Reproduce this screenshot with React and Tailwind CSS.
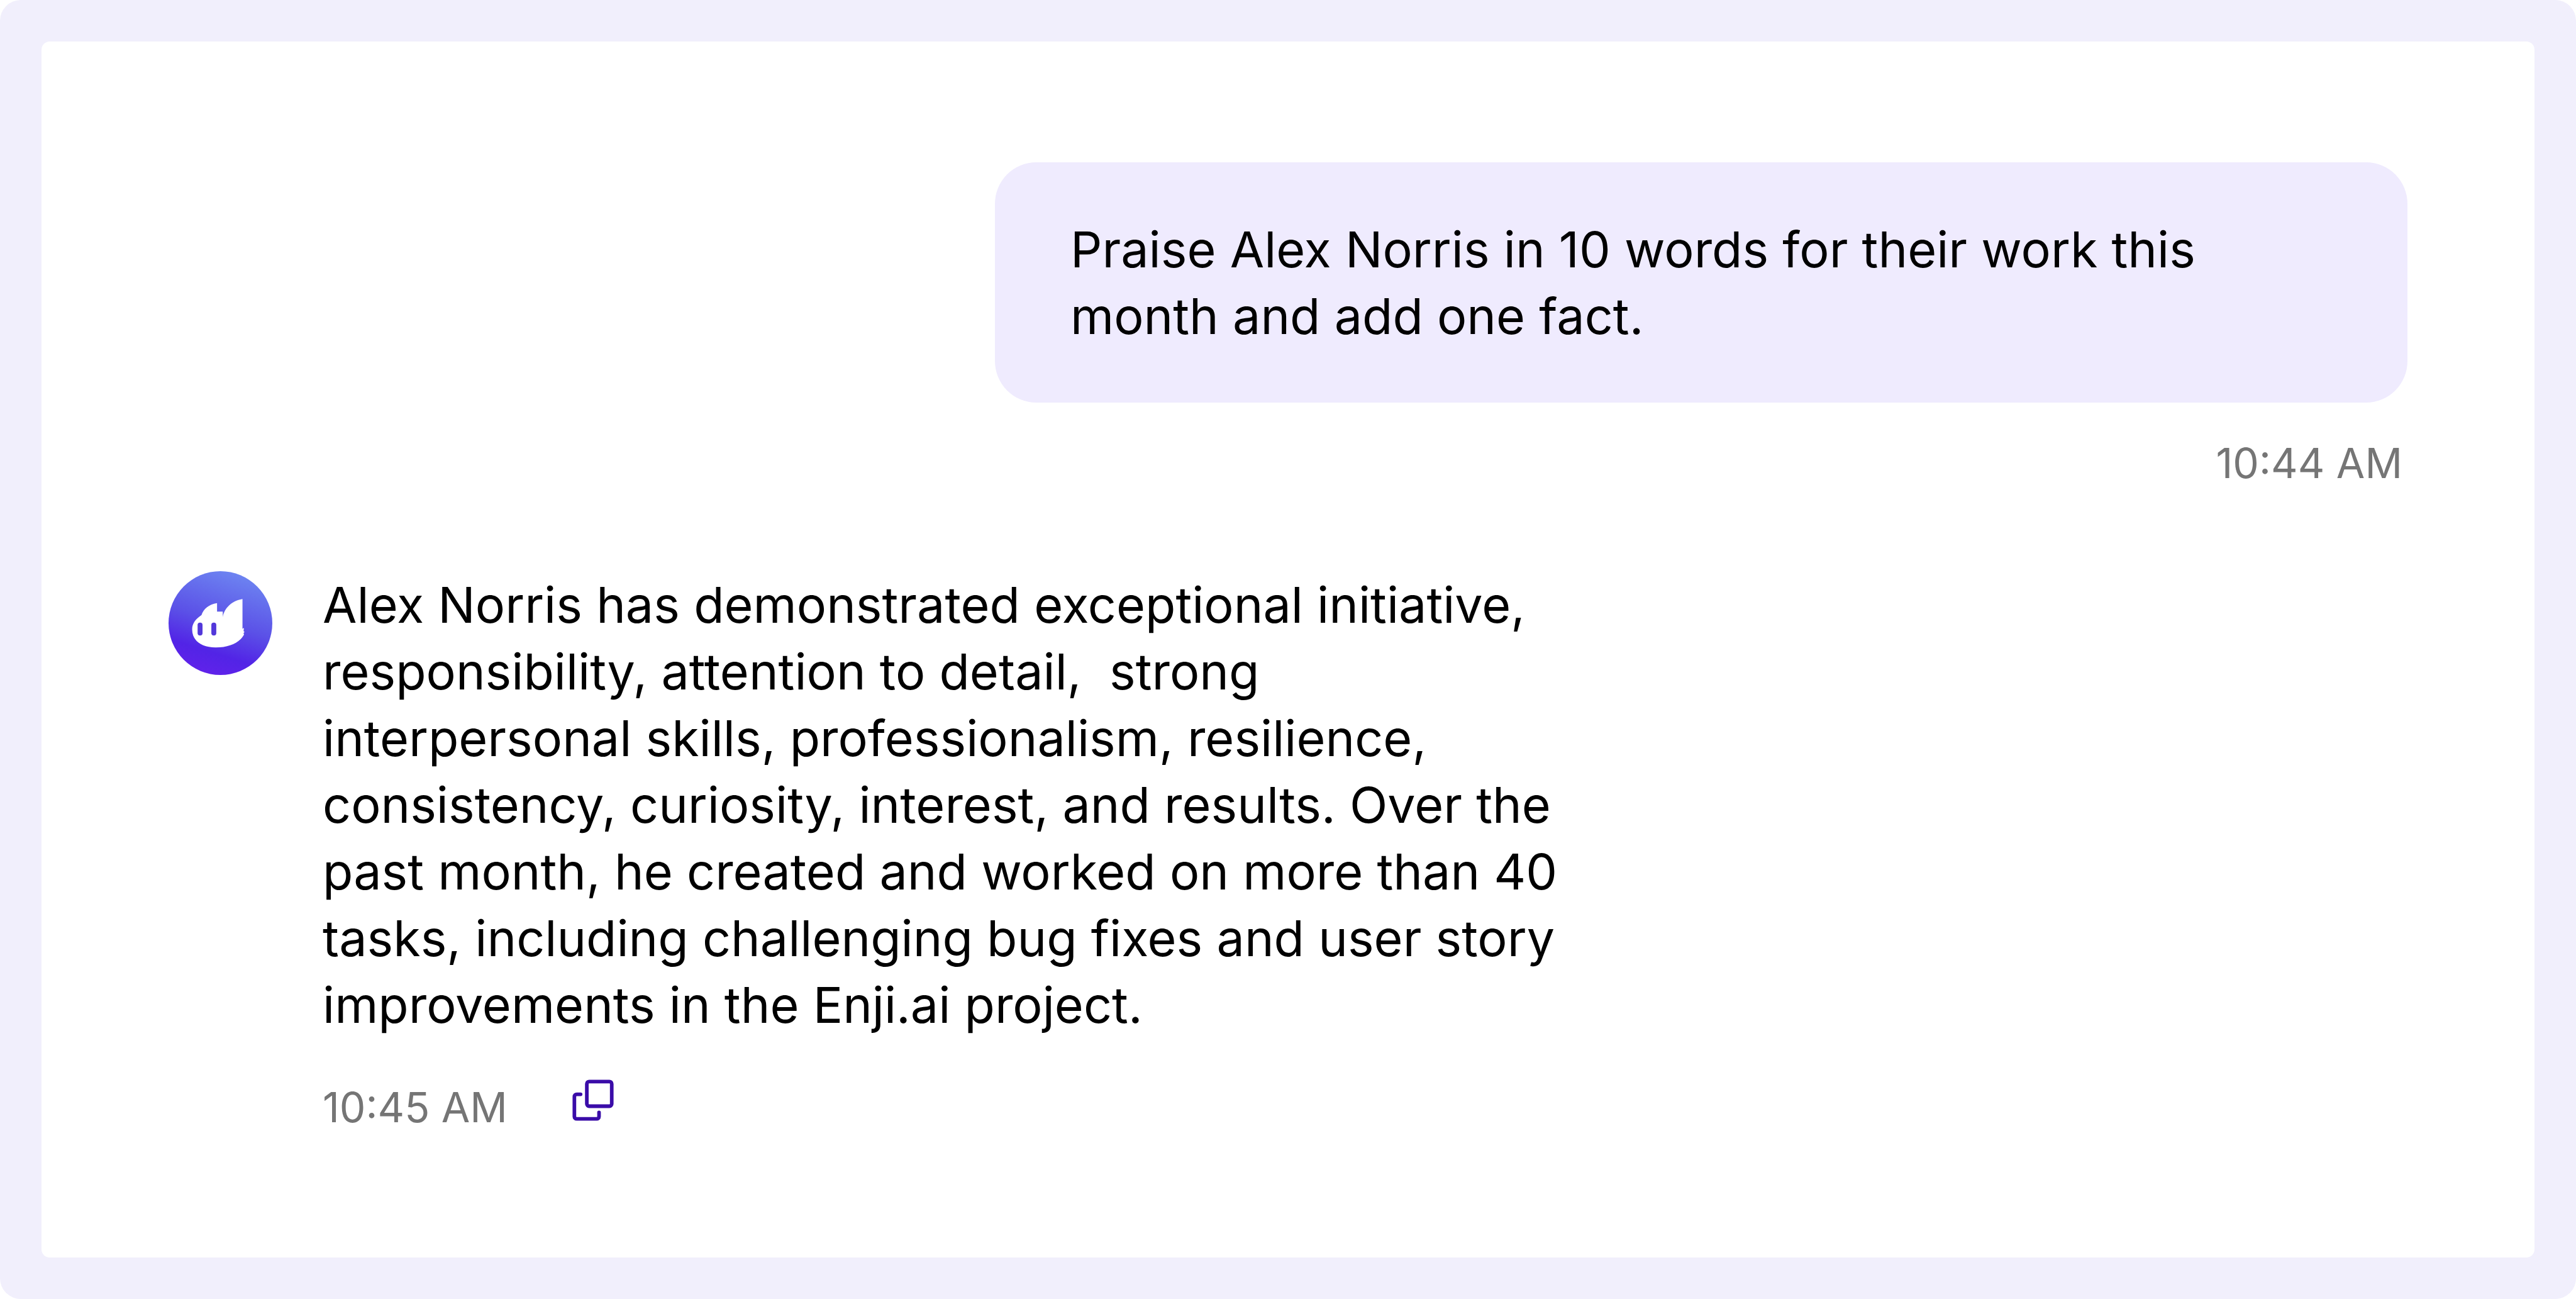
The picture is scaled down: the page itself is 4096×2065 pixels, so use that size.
import React, { useState } from 'react';

const MESSAGES = [
  {
    id: 1,
    from: 'user',
    time: '10:44 AM',
    text: 'Praise Alex Norris in 10 words for their work this month and add one fact.',
  },
  {
    id: 2,
    from: 'bot',
    time: '10:45 AM',
    text: 'Alex Norris has demonstrated exceptional initiative, responsibility, attention to detail,\u00a0 strong interpersonal skills, professionalism, resilience, consistency, curiosity, interest, and results. Over the past month, he created and worked on more than 40 tasks, including challenging bug fixes and user story improvements in the Enji.ai project.',
  },
];

function BotAvatar() {
  return (
    <svg className="size-[165px] shrink-0" viewBox="0 0 200 200" role="img" aria-label="Enji">
      <defs>
        <linearGradient id="avatar-bg" x1="0.68" y1="0.02" x2="0.38" y2="0.98">
          <stop offset="0" stopColor="#6d84f1" />
          <stop offset="0.5" stopColor="#5b51e7" />
          <stop offset="0.8" stopColor="#5224e6" />
          <stop offset="1" stopColor="#5f22ea" />
        </linearGradient>
      </defs>
      <circle cx="100" cy="100" r="100" fill="url(#avatar-bg)" />
      <path
        fill="#fff"
        d="M93.500 61.500V78H104.500V88.500C107 72 121 57 142.500 53.500V111L145.500 109.500L144.500 115.500L146.500 117L144.500 119.500L145.500 122C137 138 117 147 91 147C62 147 45.500 133 45.500 112C45.500 101 52 92 63.500 84.500C67.500 73 77 64 93.500 61.500Z"
      />
      <rect x="56" y="99" width="9.500" height="25" rx="4.500" fill="#5338da" />
      <rect x="82.500" y="99" width="9.500" height="25" rx="4.500" fill="#5338da" />
    </svg>
  );
}

function CopyButton({ text }) {
  const [copied, setCopied] = useState(false);

  const handleCopy = async () => {
    try {
      await navigator.clipboard.writeText(text);
      setCopied(true);
    } catch (err) {
      setCopied(false);
    }
  };

  return (
    <button
      type="button"
      onClick={handleCopy}
      aria-label={copied ? 'Copied' : 'Copy message'}
      className="cursor-pointer text-[#3a0ca8]"
    >
      <svg
        className="size-[66px]"
        viewBox="0 0 80 80"
        fill="none"
        stroke="currentColor"
        strokeWidth="7"
        strokeLinecap="round"
        strokeLinejoin="round"
      >
        <rect x="28" y="4" width="48" height="47.500" rx="4.500" />
        <path d="M16 28.500H8.500a4.500 4.500 0 0 0-4.500 4.500V71.500a4.500 4.500 0 0 0 4.500 4.500H47a4.500 4.500 0 0 0 4.500-4.500V63.500" />
      </svg>
    </button>
  );
}

function UserMessage({ message }) {
  return (
    <div className="flex w-full max-w-[2246px] flex-col self-end">
      <p className="rounded-[66px] bg-[#efebfe] px-[120px] py-[85px] text-[79px] leading-[106px] text-black">
        {message.text}
      </p>
      <time className="mt-[52px] self-end pr-2 text-[66px] leading-[88px] text-[#757575]">
        {message.time}
      </time>
    </div>
  );
}

function BotMessage({ message }) {
  return (
    <div className="flex items-start gap-20">
      <BotAvatar />
      <div className="max-w-[2000px]">
        <p className="text-[79px] leading-[106px] text-black">{message.text}</p>
        <div className="mt-[66px] flex items-start gap-[103px]">
          <time className="text-[66px] leading-[88px] text-[#757575]">{message.time}</time>
          <CopyButton text={message.text} />
        </div>
      </div>
    </div>
  );
}

export default function App() {
  return (
    <div className="bg-white font-['Inter',sans-serif]">
      <div className="flex min-h-screen rounded-[33px] bg-[#f1effc] p-[66px]">
        <main className="flex flex-1 flex-col gap-[128px] rounded-[13px] bg-white px-[202px] py-48">
          {MESSAGES.map((message) =>
            message.from === 'user' ? (
              <UserMessage key={message.id} message={message} />
            ) : (
              <BotMessage key={message.id} message={message} />
            )
          )}
        </main>
      </div>
    </div>
  );
}
